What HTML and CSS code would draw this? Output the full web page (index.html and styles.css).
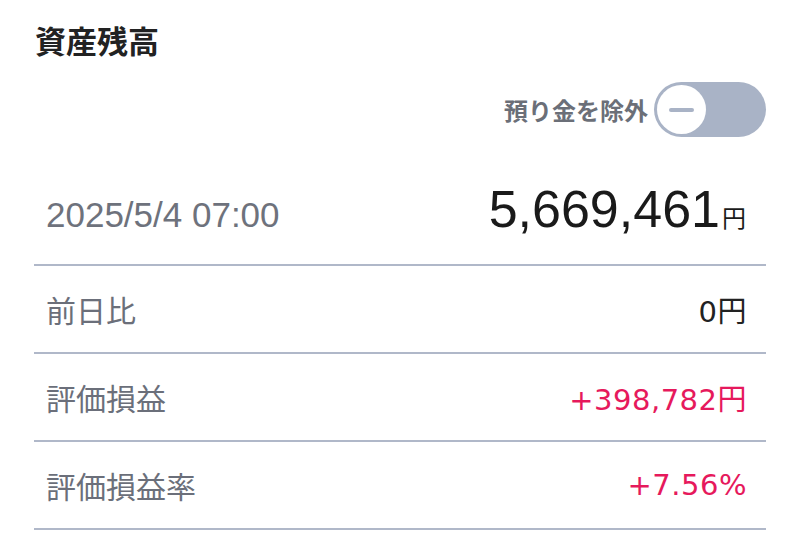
FILE: index.html
```html
<!DOCTYPE html>
<html lang="ja">
<head>
    <meta charset="UTF-8">
    <meta name="viewport" content="width=device-width, initial-scale=1.0">
    <title>資産残高</title>
    <link rel="stylesheet" href="styles.css">
</head>
<body>
    <div class="balance">
        <h1>資産残高</h1>

        <!-- 預り金トグル -->
        <div class="toggle-row">
            <span class="toggle-label">預り金を除外</span>
            <div class="toggle">
                <div class="knob"><span class="minus"></span></div>
            </div>
        </div>

        <!-- 合計 -->
        <div class="summary">
            <span class="date">2025/5/4 07:00</span>
            <span class="total">5,669,461<span class="yen">円</span></span>
        </div>

        <div class="row">
            <span class="label">前日比</span>
            <span class="value">0円</span>
        </div>
        <div class="row">
            <span class="label">評価損益</span>
            <span class="value plus">+398,782円</span>
        </div>
        <div class="row">
            <span class="label">評価損益率</span>
            <span class="value plus">+7.56%</span>
        </div>
    </div>
</body>
</html>
```

FILE: styles.css
```css
* { margin: 0; padding: 0; box-sizing: border-box; }
body {
    font-family: "Noto Sans CJK JP", "Liberation Sans", sans-serif;
    background-color: #ffffff;
    color: #222;
}
.balance {
    padding: 20px 34px 0;
}
h1 {
    font-size: 31px;
    line-height: 40px;
    font-weight: 700;
    color: #222;
    padding-left: 1px;
}
.toggle-row {
    display: flex;
    justify-content: flex-end;
    align-items: center;
    gap: 6px;
    margin-top: 22px;
    height: 55px;
}
.toggle-label {
    font-size: 24px;
    font-weight: 700;
    color: #6b6f78;
    line-height: 1;
}
.toggle {
    width: 112px;
    height: 55px;
    border-radius: 28px;
    background-color: #a9b3c6;
    padding: 3px;
}
.knob {
    width: 49px;
    height: 49px;
    border-radius: 50%;
    background-color: #ffffff;
    display: flex;
    justify-content: center;
    align-items: center;
}
.minus {
    width: 25px;
    height: 4px;
    border-radius: 2px;
    background-color: #a9b3c6;
}
.summary {
    display: flex;
    justify-content: space-between;
    align-items: baseline;
    margin-top: 18px;
    height: 111px;
    padding: 24px 20px 0 12px;
    border-bottom: 2px solid #b0b8c9;
}
.date {
    font-family: "Liberation Sans", sans-serif;
    font-size: 35px;
    color: #6e727c;
}
.total {
    font-family: "Liberation Sans", sans-serif;
    font-size: 52px;
    color: #1a1a1a;
}
.yen {
    font-family: "Noto Sans CJK JP", sans-serif;
    font-size: 24px;
    margin-left: 2px;
}
.row {
    display: flex;
    justify-content: space-between;
    align-items: center;
    height: 88px;
    padding: 0 19px 0 12px;
    border-bottom: 2px solid #b0b8c9;
}
.label {
    font-size: 30px;
    color: #6b6f7a;
}
.value {
    font-family: "DejaVu Sans", "Noto Sans CJK JP", sans-serif;
    font-size: 29px;
    letter-spacing: 0.5px;
    color: #222;
}
.plus {
    color: #e6195c;
}
```
